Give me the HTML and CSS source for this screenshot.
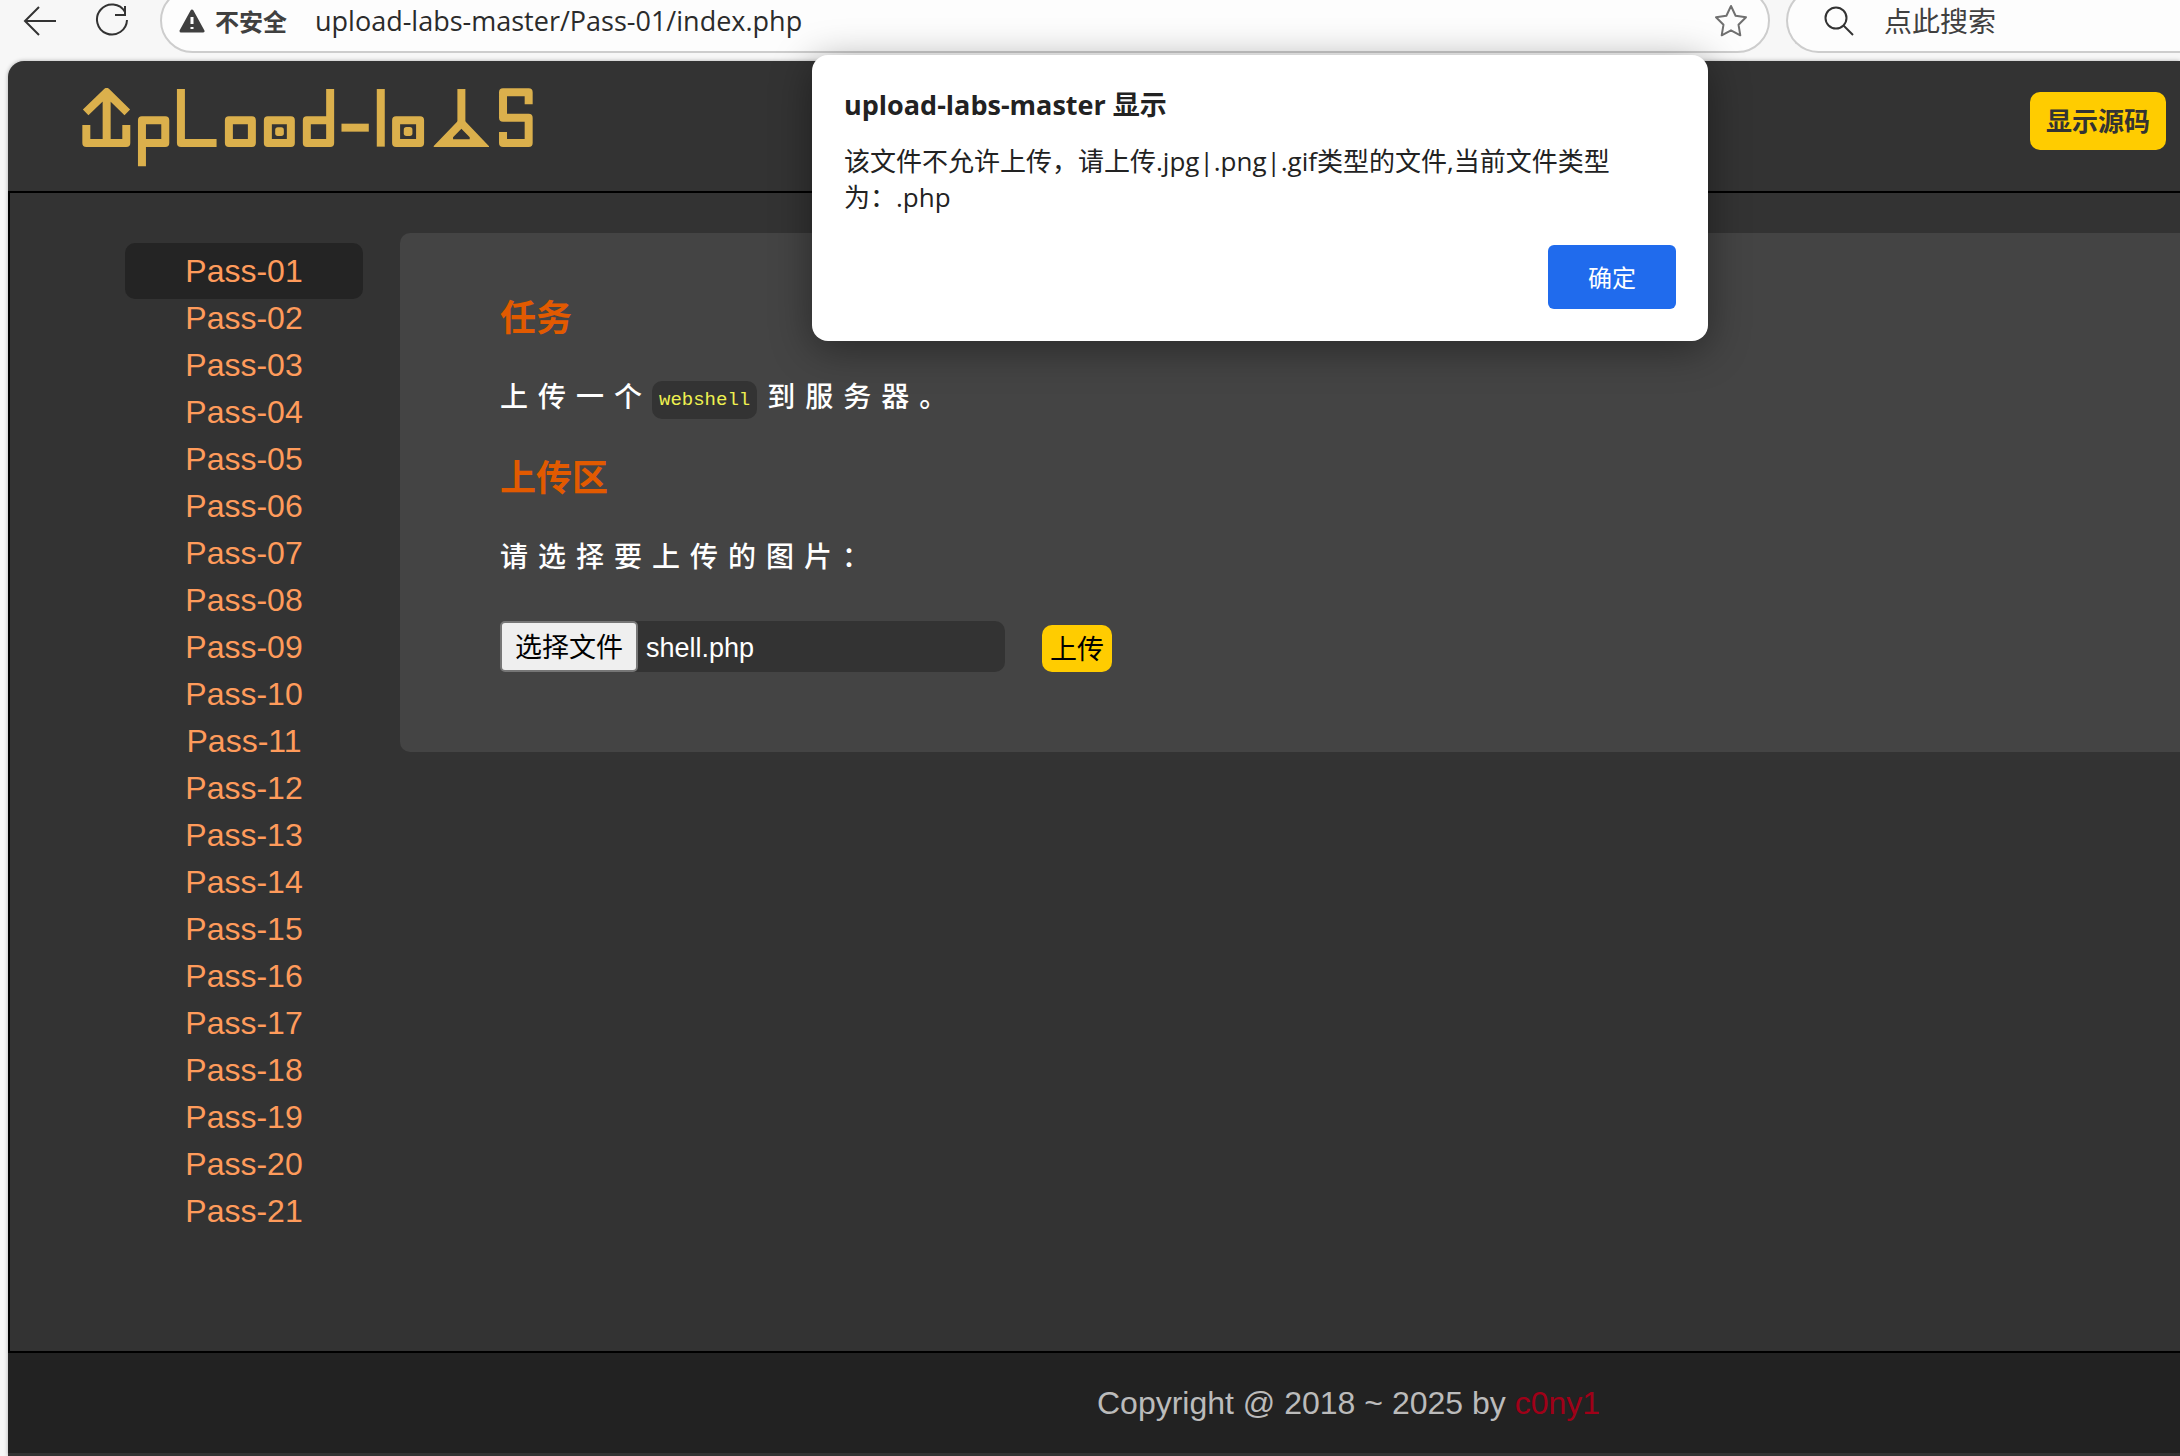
FILE: index.html
```html
<!DOCTYPE html>
<html lang="zh-CN">

<head>
    <meta charset="UTF-8">
    <meta name="viewport" content="width=device-width, initial-scale=1.0">
    <title>upload-labs</title>
    <link rel="stylesheet" href="styles.css">
</head>

<body>
    <!-- Browser toolbar -->
    <div class="toolbar">
        <button class="tool-btn" aria-label="返回">
            <svg width="36" height="36" viewBox="0 0 36 36"><path d="M34 18H3M17 4L3 18l14 14" /></svg>
        </button>
        <button class="tool-btn" aria-label="刷新">
            <svg width="36" height="36" viewBox="0 0 36 36"><path d="M31 9A15 15 0 1 0 33 17M31 3v9H21" /></svg>
        </button>
        <div class="address">
            <svg class="warn" width="26" height="26" viewBox="0 0 26 26">
                <path class="warn-body" d="M13 3L24 23H2z" />
                <path class="warn-mark" d="M13 9v7M13 19v2" />
            </svg>
            <span class="unsafe">不安全</span>
            <input class="url" type="text" value="upload-labs-master/Pass-01/index.php" aria-label="地址">
            <button class="star" aria-label="收藏">
                <svg width="34" height="34" viewBox="0 0 34 34"><path d="M17 2l4.600 9.700 10.400 1.500-7.500 7.500 1.800 10.600L17 26.300l-9.300 5 1.800-10.600L2 13.200l10.400-1.500z" /></svg>
            </button>
        </div>
        <div class="search">
            <svg width="32" height="32" viewBox="0 0 32 32"><circle cx="12" cy="13" r="10.500" /><path d="M19.500 20.500L29 30" /></svg>
            <input type="search" placeholder="点此搜索" aria-label="搜索">
        </div>
    </div>

    <div class="page">
        <!-- Head -->
        <header class="head">
            <a class="logo" href="#" aria-label="upload-labs">
                <svg width="451" height="79" viewBox="66 54 1354 237">
                    <path d="M77 127L140 66L202 127M140 70V219M79 165V219H199V165" />
                    <path d="M246 289V151H316V219H246" />
                    <path d="M363 57V219H470" />
                    <rect x="507" y="151" width="69" height="68" />
                    <rect x="624" y="151" width="69" height="68" />
                    <rect class="dot" x="646" y="172" width="26" height="26" rx="8" />
                    <path d="M811 57V219H741V151H811" />
                    <path d="M845 173H927" />
                    <path d="M963 57V230" />
                    <rect x="1009" y="151" width="72" height="68" />
                    <rect class="dot" x="1032" y="171" width="26" height="27" rx="8" />
                    <path d="M1205 57V165" />
                    <path class="dot" d="M1195 152H1215L1288 229V231H1122V228ZM1205 176L1180 202V208H1230V202Z" />
                    <path d="M1407 103V67H1330V143H1407V219H1330V186" />
                </svg>
            </a>
            <button class="show-code">显示源码</button>
        </header>

        <main class="main">
            <!-- Menu -->
            <ul class="menu">
                <li><a class="active" href="#">Pass-01</a></li>
                <li><a href="#">Pass-02</a></li>
                <li><a href="#">Pass-03</a></li>
                <li><a href="#">Pass-04</a></li>
                <li><a href="#">Pass-05</a></li>
                <li><a href="#">Pass-06</a></li>
                <li><a href="#">Pass-07</a></li>
                <li><a href="#">Pass-08</a></li>
                <li><a href="#">Pass-09</a></li>
                <li><a href="#">Pass-10</a></li>
                <li><a href="#">Pass-11</a></li>
                <li><a href="#">Pass-12</a></li>
                <li><a href="#">Pass-13</a></li>
                <li><a href="#">Pass-14</a></li>
                <li><a href="#">Pass-15</a></li>
                <li><a href="#">Pass-16</a></li>
                <li><a href="#">Pass-17</a></li>
                <li><a href="#">Pass-18</a></li>
                <li><a href="#">Pass-19</a></li>
                <li><a href="#">Pass-20</a></li>
                <li><a href="#">Pass-21</a></li>
            </ul>

            <!-- Task and upload area -->
            <section class="panel">
                <h3>任务</h3>
                <p>上传一个<code>webshell</code>到服务器。</p>
                <h3>上传区</h3>
                <form class="upload-form">
                    <p>请选择要上传的图片：</p>
                    <div class="upload-row">
                        <label class="file">
                            <input type="file" name="upload_file">
                            <span class="file-btn">选择文件</span>
                            <span class="file-name">shell.php</span>
                        </label>
                        <button class="submit" type="button">上传</button>
                    </div>
                </form>
            </section>
        </main>

        <footer class="footer">Copyright @ 2018 ~ 2025 by <a href="#">c0ny1</a></footer>
    </div>

    <!-- Alert -->
    <div class="alert" role="alertdialog" aria-labelledby="alert-title" aria-describedby="alert-text">
        <h2 id="alert-title">upload-labs-master 显示</h2>
        <p id="alert-text">该文件不允许上传，请上传.jpg|.png|.gif类型的文件,当前文件类型为：.php</p>
        <button class="ok">确定</button>
    </div>
</body>

</html>
```
FILE: styles.css
```css
* {
    box-sizing: border-box;
    margin: 0;
    padding: 0;
}

body {
    display: flex;
    flex-direction: column;
    min-height: 100vh;
    background: #f7f7f7;
    font-family: "Liberation Sans", "Noto Sans CJK SC", sans-serif;
    overflow: hidden;
}

button,
input {
    font-family: inherit;
    border: none;
    background: none;
    outline: none;
}

button {
    cursor: pointer;
}

a {
    text-decoration: none;
}

/* Browser toolbar, its top edge is cut off by the window */
.toolbar {
    display: flex;
    align-items: center;
    height: 65px;
    margin-top: -12px;
    margin-bottom: 8px;
    padding-left: 22px;
    font-family: "Open Sans", "Noto Sans CJK SC", sans-serif;
}

.toolbar svg {
    display: block;
    fill: none;
    stroke: #333;
    stroke-width: 2;
}

.tool-btn {
    margin-right: 36px;
}

.tool-btn + .tool-btn {
    margin-right: 30px;
}

.address,
.search {
    display: flex;
    align-items: center;
    height: 65px;
    background: #fdfdfd;
    border: 2px solid #cdcdcd;
    border-radius: 33px;
}

.address {
    flex: 1;
    padding: 0 20px 0 17px;
}

.toolbar .warn-body {
    fill: #404040;
    stroke: #404040;
    stroke-width: 3;
    stroke-linejoin: round;
}

.toolbar .warn-mark {
    stroke: #fff;
    stroke-width: 3;
}

.unsafe {
    margin: 0 28px 0 10px;
    font-size: 24px;
    font-weight: bold;
    color: #404040;
}

.url {
    flex: 1;
    font-size: 27px;
    color: #2b2b2b;
}

.toolbar .star svg {
    stroke: #707070;
    stroke-linejoin: round;
}

.search {
    width: 394px;
    margin-left: 16px;
    border-right: none;
    border-radius: 33px 0 0 33px;
    padding-left: 36px;
}

.search input {
    flex: 1;
    min-width: 0;
    margin-left: 28px;
    font-size: 28px;
}

.search input::placeholder {
    color: #404040;
}

/* Page */
.page {
    flex: 1;
    display: flex;
    flex-direction: column;
    margin-left: 8px;
    padding-bottom: 3px;
    background: #333;
    border-top-left-radius: 16px;
    box-shadow: 0 0 4px rgba(0, 0, 0, 0.3);
}

.head {
    display: flex;
    justify-content: space-between;
    align-items: flex-start;
    height: 130px;
    padding: 27px 14px 0 74px;
}

.logo svg {
    display: block;
    fill: none;
    stroke: #dbb04c;
    stroke-width: 24;
    stroke-linejoin: round;
}

.logo .dot {
    fill: #dbb04c;
    stroke: none;
    fill-rule: evenodd;
}

.show-code {
    height: 58px;
    margin-top: 4px;
    padding: 0 16px 4px;
    border-radius: 10px;
    background: #fc0;
    color: #333;
    font-size: 26px;
    font-weight: bold;
}

.main {
    flex: 1;
    display: flex;
    align-items: flex-start;
    padding-top: 40px;
    border: 2px solid #000;
    border-right: none;
}

/* Menu */
.menu {
    width: 390px;
    padding: 15px 0 0 78px;
    list-style: none;
    text-align: center;
}

.menu li {
    height: 47px;
    line-height: 47px;
    font-size: 32px;
}

.menu a {
    padding: 10px 60px;
    border-radius: 10px;
    color: #ff9b5b;
}

.menu .active {
    background: #242424;
}

/* Content */
.panel {
    flex: 1;
    padding: 60px 100px 80px;
    border-radius: 10px 0 0 10px;
    background: #444;
}

.panel h3 {
    height: 50px;
    line-height: 52px;
    font-size: 36px;
    color: #e25a00;
}

.panel p {
    height: 50px;
    line-height: 50px;
    margin: 30px 0;
    font-size: 28px;
    font-weight: 500;
    letter-spacing: 10px;
    color: #fff;
}

.panel code {
    display: inline-block;
    height: 38px;
    line-height: 38px;
    margin-right: 10px;
    padding: 0 7px;
    border-radius: 10px;
    background: #333;
    color: #eef050;
    font-family: "Liberation Mono", monospace;
    font-size: 19px;
    font-weight: normal;
    letter-spacing: 0;
    vertical-align: middle;
}

.upload-row {
    display: flex;
    align-items: flex-end;
    gap: 37px;
    margin-top: 38px;
}

.file {
    display: flex;
    align-items: center;
    width: 505px;
    height: 51px;
    border-radius: 10px;
    background: #333;
    font-size: 27px;
    line-height: 51px;
    cursor: pointer;
}

.file input {
    display: none;
}

.file-btn {
    height: 51px;
    padding: 0 13px;
    border: 2px solid #767676;
    border-radius: 5px;
    background: #efefef;
    color: #000;
}

.file-name {
    margin-left: 8px;
    padding-top: 4px;
    color: #fff;
}

.submit {
    height: 47px;
    padding: 0 8px 2px;
    border-radius: 10px;
    background: #fc0;
    color: #000;
    font-size: 27px;
}

.footer {
    height: 100px;
    line-height: 100px;
    padding-left: calc(50% + 3px);
    background: #222;
    color: #bbb;
    font-size: 32px;
    white-space: nowrap;
}

.footer a {
    color: #a00018;
}

/* Alert over the page */
.alert {
    position: absolute;
    top: 55px;
    left: 812px;
    width: 896px;
    padding: 32px;
    border-radius: 16px;
    background: #fff;
    color: #222;
    box-shadow: 0 8px 40px rgba(0, 0, 0, 0.4);
    font-family: "Open Sans", "Noto Sans CJK SC", sans-serif;
    text-align: right;
}

.alert h2 {
    height: 36px;
    line-height: 36px;
    font-size: 27px;
    text-align: left;
}

.alert p {
    margin: 20px 0 30px;
    padding-right: 60px;
    line-height: 36px;
    font-size: 26px;
    text-align: left;
}

.ok {
    display: block;
    width: 128px;
    height: 64px;
    margin-left: auto;
    padding-bottom: 2px;
    border-radius: 6px;
    background: #206bed;
    color: #fff;
    font-size: 24px;
}
```
